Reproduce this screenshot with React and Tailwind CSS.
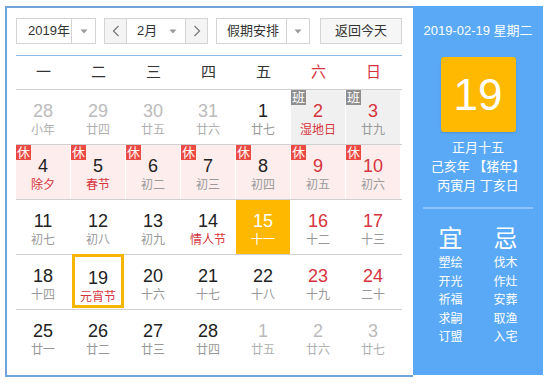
import React from 'react';

const F = { fontFamily: '"Liberation Sans", "Noto Sans CJK SC", sans-serif' };

const rows = [
  [
    { d: 28, l: '小年', o: 1 }, { d: 29, l: '廿四', o: 1 }, { d: 30, l: '廿五', o: 1 }, { d: 31, l: '廿六', o: 1 },
    { d: 1, l: '廿七' }, { d: 2, l: '湿地日', h: 1, ban: 1, we: 1 }, { d: 3, l: '廿九', ban: 1, we: 1 },
  ],
  [
    { d: 4, l: '除夕', h: 1, xiu: 1 }, { d: 5, l: '春节', h: 1, xiu: 1 }, { d: 6, l: '初二', xiu: 1 }, { d: 7, l: '初三', xiu: 1 },
    { d: 8, l: '初四', xiu: 1 }, { d: 9, l: '初五', xiu: 1, we: 1 }, { d: 10, l: '初六', xiu: 1, we: 1 },
  ],
  [
    { d: 11, l: '初七' }, { d: 12, l: '初八' }, { d: 13, l: '初九' }, { d: 14, l: '情人节', h: 1 },
    { d: 15, l: '十一', sel: 1 }, { d: 16, l: '十二', we: 1 }, { d: 17, l: '十三', we: 1 },
  ],
  [
    { d: 18, l: '十四' }, { d: 19, l: '元宵节', h: 1, today: 1 }, { d: 20, l: '十六' }, { d: 21, l: '十七' },
    { d: 22, l: '十八' }, { d: 23, l: '十九', we: 1 }, { d: 24, l: '二十', we: 1 },
  ],
  [
    { d: 25, l: '廿一' }, { d: 26, l: '廿二' }, { d: 27, l: '廿三' }, { d: 28, l: '廿四' },
    { d: 1, l: '廿五', o: 1 }, { d: 2, l: '廿六', o: 1 }, { d: 3, l: '廿七', o: 1 },
  ],
];

function Caret() {
  return (
    <svg width="8" height="5" viewBox="0 0 8 5">
      <path d="M0.5 0.5 L7.5 0.5 L4 4.5 Z" fill="#9a9a9a" />
    </svg>
  );
}

function Chevron({ dir }) {
  return (
    <svg width="8" height="12" viewBox="0 0 8 12">
      {dir === 'l' ? (
        <path d="M6.5 1 L1.5 6 L6.5 11" fill="none" stroke="#777" strokeWidth="1.2" />
      ) : (
        <path d="M1.5 1 L6.5 6 L1.5 11" fill="none" stroke="#777" strokeWidth="1.2" />
      )}
    </svg>
  );
}

function Cell({ c }) {
  let bg = 'bg-white';
  if (c.ban) bg = 'bg-[#f0f0f0]';
  if (c.xiu) bg = 'bg-[#fdeded]';
  if (c.sel) bg = 'bg-[#ffb800]';
  let numColor = 'text-[#222]';
  if (c.we) numColor = 'text-[#d6343d]';
  if (c.o) numColor = 'text-[#bbbbbb]';
  if (c.sel) numColor = 'text-white';
  let lColor = 'text-[#999]';
  if (c.o) lColor = 'text-[#b0b0b0]';
  if (c.h) lColor = 'text-[#d6343d]';
  if (c.sel) lColor = 'text-white';
  return (
    <div className="border-r border-white h-[54px]">
      <div
        className={`relative h-full flex flex-col items-center pt-[10px] ${bg} ${
          c.today ? '-mt-px h-[55px] border-[3px] border-[#f7b500] pt-[8px] mx-px' : ''
        }`}
      >
        {c.xiu ? (
          <div className="absolute left-0 top-0 w-[15px] h-[15px] bg-[#ea4a44] text-white text-[13px] leading-[15px] text-center">
            休
          </div>
        ) : null}
        {c.ban ? (
          <div className="absolute left-0 top-0 w-[15px] h-[15px] bg-[#8e8e8e] text-white text-[13px] leading-[15px] text-center">
            班
          </div>
        ) : null}
        <div className={`text-[18px] leading-[22px] ${numColor}`}>{c.d}</div>
        <div className={`text-[12px] leading-[16px] ${lColor}`}>{c.l}</div>
      </div>
    </div>
  );
}

export default function App() {
  const weeks = ['一', '二', '三', '四', '五', '六', '日'];
  return (
    <div className="w-[550px] h-[384px] bg-white pt-[6px] pl-[5px]" style={F}>
      <div className="flex w-[538px] h-[371px]">
        <div className="w-[408px] h-full border-l-2 border-t-2 border-b-2 border-[#6fa5d8] pl-[9px] pt-[10px]">
          {/* controls */}
          <div className="flex items-center h-[26px] text-[13px] text-[#333] whitespace-nowrap">
            <div className="flex h-[26px] w-[80px] border border-[#d4d4d4]">
              <div className="flex-1 pl-[11px] leading-[24px]">2019年</div>
              <div className="w-[24px] border-l border-[#d4d4d4] flex items-center justify-center">
                <Caret />
              </div>
            </div>
            <div className="flex h-[26px] w-[104px] ml-[8px] border border-[#d4d4d4]">
              <div className="w-[22px] bg-[#f4f4f4] border-r border-[#d4d4d4] flex items-center justify-center">
                <Chevron dir="l" />
              </div>
              <div className="flex-1 flex items-center">
                <span className="pl-[10px] leading-[24px] flex-1">2月</span>
                <span className="pr-[8px] flex items-center">
                  <Caret />
                </span>
              </div>
              <div className="w-[22px] bg-[#f4f4f4] border-l border-[#d4d4d4] flex items-center justify-center">
                <Chevron dir="r" />
              </div>
            </div>
            <div className="flex h-[26px] w-[94px] ml-[8px] border border-[#d4d4d4]">
              <div className="flex-1 pl-[10px] leading-[24px]">假期安排</div>
              <div className="w-[23px] border-l border-[#d4d4d4] flex items-center justify-center">
                <Caret />
              </div>
            </div>
            <div className="h-[26px] w-[82px] ml-[10px] border border-[#d4d4d4] bg-[#f6f6f6] text-center leading-[24px]">
              返回今天
            </div>
          </div>
          <div className="w-[386px] h-px bg-[#8cb9e3] mt-[11px]" />
          {/* header */}
          <div className="grid grid-cols-[repeat(7,55px)] h-[33px] items-center text-[15px]">
            {weeks.map((w, i) => (
              <div key={i} className={`text-center ${i >= 5 ? 'text-[#d6343d]' : 'text-[#333]'}`}>
                {w}
              </div>
            ))}
          </div>
          {rows.map((r, ri) => (
            <div key={ri} className="w-[386px] border-t border-[#d0d0d0]">
              <div className="grid grid-cols-[repeat(7,55px)]">
                {r.map((c, ci) => (
                  <Cell key={ci} c={c} />
                ))}
              </div>
            </div>
          ))}
        </div>
        {/* right panel */}
        <div className="w-[130px] h-[369px] bg-[#5aa9f6] flex flex-col items-center text-white pt-[15px]">
          <div className="text-[13px] leading-[20px] whitespace-nowrap">2019-02-19 星期二</div>
          <div className="mt-[16px] w-[75px] h-[75px] bg-[#ffb900] rounded-[3px] shadow-[0_1px_2px_rgba(0,0,0,0.15)] flex items-center justify-center text-[44px] leading-none">
            19
          </div>
          <div className="mt-[6px] text-[13px] leading-[19px] text-center whitespace-nowrap">
            <div>正月十五</div>
            <div>己亥年 【猪年】</div>
            <div>丙寅月 丁亥日</div>
          </div>
          <div className="mt-[12px] w-[110px] h-[2px] bg-[#8cc3f9]" />
          <div className="flex mt-[15px]">
            <div className="w-[55px] flex flex-col items-center">
              <div className="text-[24px] leading-[30px]">宜</div>
              <div className="text-[12px] leading-[18.5px] text-center">
                <div>塑绘</div>
                <div>开光</div>
                <div>祈福</div>
                <div>求嗣</div>
                <div>订盟</div>
              </div>
            </div>
            <div className="w-[55px] flex flex-col items-center">
              <div className="text-[24px] leading-[30px]">忌</div>
              <div className="text-[12px] leading-[18.5px] text-center">
                <div>伐木</div>
                <div>作灶</div>
                <div>安葬</div>
                <div>取渔</div>
                <div>入宅</div>
              </div>
            </div>
          </div>
        </div>
      </div>
    </div>
  );
}
